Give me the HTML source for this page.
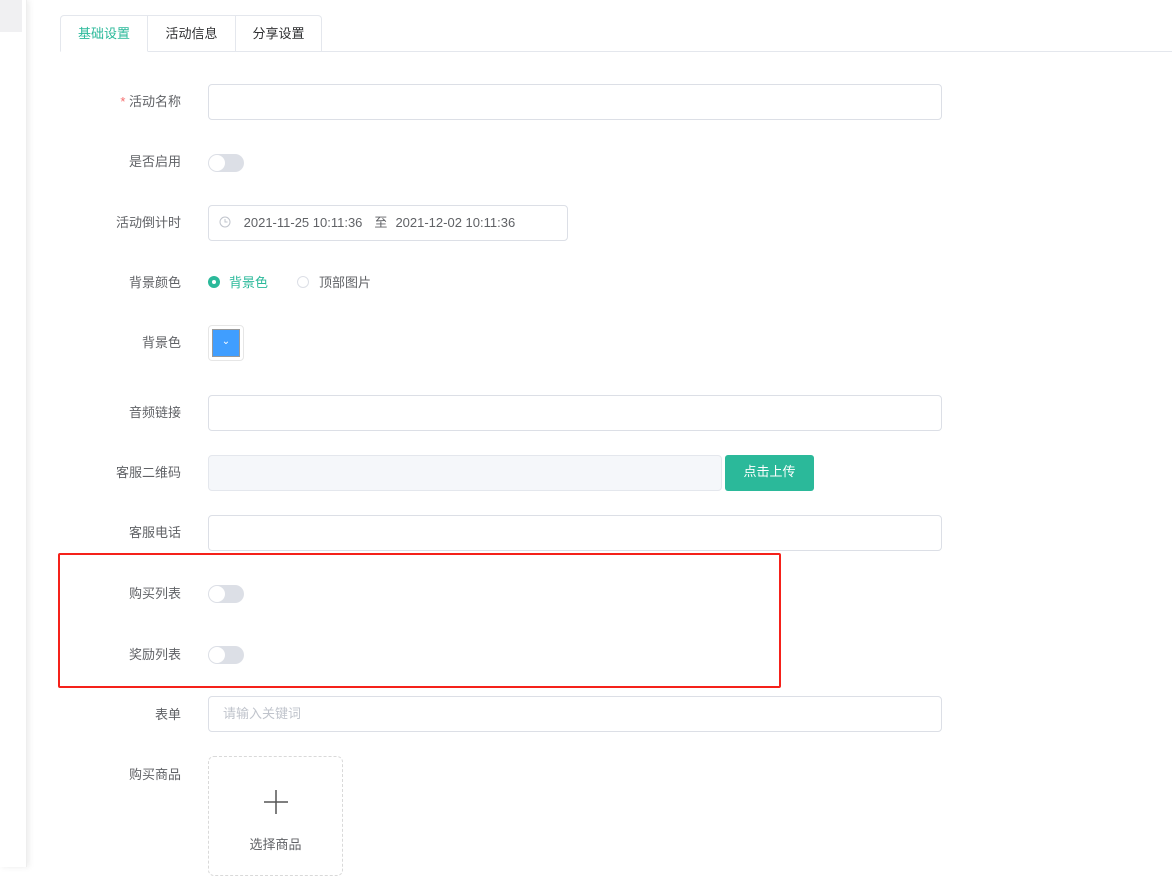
<!DOCTYPE html>
<html><head><meta charset="utf-8"><style>
*{box-sizing:border-box;margin:0;padding:0}
body{width:1172px;height:867px;background:#fff;font-family:"Liberation Sans","Noto Sans CJK SC",sans-serif;font-size:13px;color:#606266;position:relative;overflow:hidden}
.side{position:absolute;left:0;top:0;width:27px;height:867px;background:#fff;box-shadow:2px 0 6px rgba(0,0,0,.08);border-right:1px solid #eee}
.side .b{position:absolute;left:0;top:0;width:22px;height:32px;background:#f0f0f2}
.a{position:absolute}
.tabs{left:60px;top:15px;height:37px;display:flex}
.tab{height:37px;line-height:35px;text-align:center;border:1px solid #e4e7ed;border-left:none;font-size:13px;color:#303133;background:#fff}
.tab:first-child{border-left:1px solid #e4e7ed;border-radius:4px 0 0 0;color:#2bb99a;border-bottom-color:#fff}
.tab:last-child{border-radius:0 4px 0 0}
.tabline{left:322px;top:51px;width:850px;height:1px;background:#e4e7ed}
.lbl{width:181px;left:0;text-align:right;font-size:13px;color:#606266}
.inp{left:208px;width:734px;height:36px;border:1px solid #dcdfe6;border-radius:4px;background:#fff}
.sw{left:208px;width:36px;height:18px;border-radius:9px;background:#dcdfe6}
.sw::after{content:"";position:absolute;left:1px;top:1px;width:16px;height:16px;border-radius:50%;background:#fff}
</style></head><body>
<div class="side"><div class="b"></div></div>
<div class="a tabs"><div class="tab" style="width:88px">基础设置</div><div class="tab" style="width:88px">活动信息</div><div class="tab" style="width:86px">分享设置</div></div>
<div class="a tabline"></div>

<div class="a lbl" style="top:91px"><span style="color:#f56c6c">*</span> 活动名称</div>
<div class="a inp" style="top:84px"></div>

<div class="a lbl" style="top:151px">是否启用</div>
<div class="a sw" style="top:154px"></div>

<div class="a lbl" style="top:212px">活动倒计时</div>
<div class="a inp" style="top:205px;width:360px;padding-left:10px;line-height:34px;color:#606266">
<svg width="12" height="12" viewBox="0 0 12 12" style="vertical-align:-1px"><circle cx="6" cy="6" r="5" fill="none" stroke="#c0c4cc"/><path d="M6 3v3h2.5" fill="none" stroke="#c0c4cc"/></svg>
<span style="margin-left:9px">2021-11-25 10:11:36</span><span style="margin:0 8px 0 12px">至</span><span>2021-12-02 10:11:36</span></div>

<div class="a lbl" style="top:272px">背景颜色</div>
<div class="a" style="left:208px;top:276px;width:12px;height:12px;border-radius:50%;background:#2bb99a"><div style="position:absolute;left:4px;top:4px;width:4px;height:4px;border-radius:50%;background:#fff"></div></div>
<div class="a" style="left:229px;top:272px;color:#2bb99a">背景色</div>
<div class="a" style="left:297px;top:276px;width:12px;height:12px;border-radius:50%;border:1px solid #dcdfe6"></div>
<div class="a" style="left:319px;top:272px;color:#606266">顶部图片</div>

<div class="a lbl" style="top:332px">背景色</div>
<div class="a" style="left:208px;top:325px;width:36px;height:36px;border:1px solid #e6e6e6;border-radius:4px;padding:3px"><div style="width:28px;height:28px;background:#409eff;border:1px solid #999;text-align:center;line-height:24px;color:#fff;font-size:10px">⌄</div></div>

<div class="a lbl" style="top:402px">音频链接</div>
<div class="a inp" style="top:395px"></div>

<div class="a lbl" style="top:462px">客服二维码</div>
<div class="a inp" style="top:455px;width:514px;background:#f5f7fa;border-color:#e4e7ed"></div>
<div class="a" style="left:725px;top:455px;width:89px;height:36px;background:#2bb99a;border-radius:3px;color:#fff;text-align:center;line-height:34px">点击上传</div>

<div class="a lbl" style="top:522px">客服电话</div>
<div class="a inp" style="top:515px"></div>

<div class="a" style="left:58px;top:553px;width:723px;height:135px;border:2px solid #f5211a;border-radius:2px"></div>
<div class="a lbl" style="top:583px">购买列表</div>
<div class="a sw" style="top:585px"></div>
<div class="a lbl" style="top:644px">奖励列表</div>
<div class="a sw" style="top:646px"></div>

<div class="a lbl" style="top:704px">表单</div>
<div class="a inp" style="top:696px;padding-left:14px;line-height:34px;color:#c0c4cc">请输入关键词</div>

<div class="a lbl" style="top:764px">购买商品</div>
<div class="a" style="left:208px;top:756px;width:135px;height:120px;border:1px dashed #d9d9d9;border-radius:6px">
<svg class="a" style="left:54px;top:32px" width="26" height="26" viewBox="0 0 26 26"><path d="M13 1v24M1 13h24" stroke="#555" stroke-width="1.5"/></svg>
<div class="a" style="left:0;width:133px;top:77px;text-align:center;color:#606266">选择商品</div>
</div>
</body></html>
